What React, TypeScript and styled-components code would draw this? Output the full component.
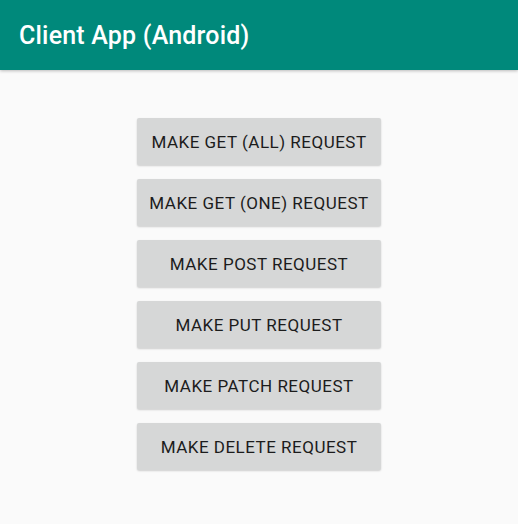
import React from "react";
import styled, { createGlobalStyle } from "styled-components";

const GlobalStyle = createGlobalStyle`
  html, body { margin: 0; padding: 0; background: #fafafa; }
  body { font-family: Roboto, "Noto Sans", sans-serif; }
`;

const Screen = styled.div`
  width: 518px;
  height: 524px;
  background: #fafafa;
  display: flex;
  flex-direction: column;
  overflow: hidden;
`;

const AppBar = styled.header`
  height: 70px;
  flex: none;
  background: #00897b;
  display: flex;
  align-items: center;
  padding-left: 19px;
  box-shadow: 0 1px 3px rgba(0, 0, 0, 0.25);
  position: relative;
  z-index: 1;
`;

const Title = styled.h1`
  margin: 0;
  color: #ffffff;
  font-family: Roboto, sans-serif;
  font-weight: 500;
  font-size: 25px;
  letter-spacing: 0.2px;
`;

const ButtonList = styled.main`
  display: flex;
  flex-direction: column;
  align-items: center;
  gap: 14px;
  padding-top: 48px;
`;

const RequestButton = styled.button`
  width: 244px;
  height: 47px;
  border: none;
  border-radius: 2px;
  background: #d6d7d7;
  color: #1c1c1c;
  font-family: Roboto, sans-serif;
  font-weight: 400;
  font-size: 17px;
  letter-spacing: 0.5px;
  text-transform: uppercase;
  box-shadow: 0 1px 2px rgba(0, 0, 0, 0.18);
  padding: 0;
  cursor: pointer;
`;

const labels = [
  "Make GET (ALL) Request",
  "Make GET (ONE) Request",
  "Make POST Request",
  "Make PUT Request",
  "Make PATCH Request",
  "Make DELETE Request",
];

export default function App() {
  return (
    <>
      <GlobalStyle />
      <Screen>
        <AppBar>
          <Title>Client App (Android)</Title>
        </AppBar>
        <ButtonList>
          {labels.map((l) => (
            <RequestButton key={l}>{l}</RequestButton>
          ))}
        </ButtonList>
      </Screen>
    </>
  );
}
